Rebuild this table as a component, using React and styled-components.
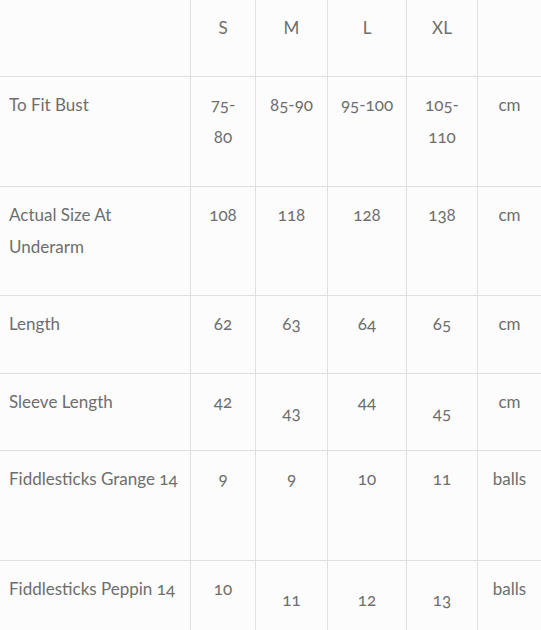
import styled, { createGlobalStyle } from "styled-components"

const GlobalStyle = createGlobalStyle`
  html, body {
    margin: 0;
    padding: 0;
    background: #fcfcfc;
    overflow: hidden;
  }
`

const sizes = ["S", "M", "L", "XL"]

// drop: cells that sit a bit lower in the original table
const rows = [
  { label: "To Fit Bust", values: ["75-80", "85-90", "95-100", "105-110"], unit: "cm", height: 110 },
  { label: "Actual Size At Underarm", values: ["108", "118", "128", "138"], unit: "cm", height: 109 },
  { label: "Length", values: ["62", "63", "64", "65"], unit: "cm", height: 78 },
  { label: "Sleeve Length", values: ["42", "43", "44", "45"], unit: "cm", height: 77, drop: [1, 3] },
  { label: "Fiddlesticks Grange 14", values: ["9", "9", "10", "11"], unit: "balls", height: 110 },
  { label: "Fiddlesticks Peppin 14", values: ["10", "11", "12", "13"], unit: "balls", height: 110, drop: [1, 2, 3] },
]

const App = () => {
  return (
    <>
      <GlobalStyle />
      <SizeTable>
        <Row $height={77}>
          <LabelCell $head />
          {sizes.map(s => <ValueCell key={s} $head>{s}</ValueCell>)}
          <ValueCell $head />
        </Row>
        {rows.map(r => (
          <Row key={r.label} $height={r.height}>
            <LabelCell>{r.label}</LabelCell>
            {r.values.map((v, i) => (
              <ValueCell key={i} $drop={r.drop && r.drop.includes(i)}>{v}</ValueCell>
            ))}
            <ValueCell>{r.unit}</ValueCell>
          </Row>
        ))}
      </SizeTable>
    </>
  )
}

const SizeTable = styled.div`
  display: grid;
  grid-template-columns: 191px 65px 72px 79px 71px 1fr;
  width: 541px;
  font-family: Lato, "Liberation Sans", sans-serif;
  font-size: 17px;
  line-height: 32px;
  color: #6e6e6e;
  font-variant-numeric: oldstyle-nums;
`

const Row = styled.div`
  display: contents;

  & > div {
    height: ${p => p.$height}px;
  }
`

const Cell = styled.div`
  box-sizing: border-box;
  border-right: 1px solid #e0e0e0;
  border-bottom: 1px solid #e0e0e0;
  padding: 12px 11px 0;
  overflow: hidden;

  &:last-child {
    border-right: none;
  }
`

const LabelCell = styled(Cell)`
  padding-left: 9px;
  padding-right: 4px;
  text-align: left;
`

const ValueCell = styled(Cell)`
  text-align: center;
  padding-top: ${p => (p.$drop ? 23 : 12)}px;
`

export default App
